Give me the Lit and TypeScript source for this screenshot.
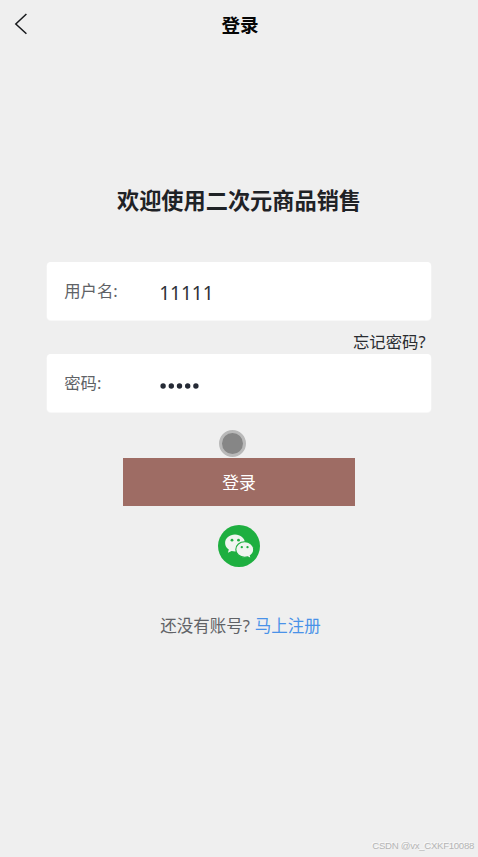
import { LitElement, html, css } from "lit";
import { customElement, property } from "lit/decorators.js";

@customElement("form-field")
class FormField extends LitElement {
  @property() label = "";
  @property() value = "";
  @property({ type: Boolean }) secret = false;

  static styles = css`
    :host {
      display: flex;
      align-items: center;
      height: 58px;
      padding-left: 17.5px;
      background: #fff;
      border-radius: 4px;
      box-sizing: border-box;
      box-shadow: 0 0.5px 0 0.5px #f8f8f8;
    }
    .label { width: 95px; font-size: 16.4px; line-height: 24px; color: #606266; }
    .value {
      font-family: "Noto Sans", sans-serif;
      font-size: 19px;
      line-height: 24px;
      color: #2d3238;
      padding-top: 3px;
    }
    .dots { display: block; width: 41px; height: 8px; margin-top: 5px; fill: #252a35; }
  `;

  render() {
    return html`
      <div class="label">${this.label}</div>
      ${this.secret
        ? html`<svg class="dots" viewBox="0 0 41 8">
            <path
              d="M1.4 4a2.7 2.7 0 1 0 5.4 0a2.7 2.7 0 1 0-5.4 0M9.6 4a2.7 2.7 0 1 0 5.4 0a2.7 2.7 0 1 0-5.4 0M17.8 4a2.7 2.7 0 1 0 5.4 0a2.7 2.7 0 1 0-5.4 0M26 4a2.7 2.7 0 1 0 5.4 0a2.7 2.7 0 1 0-5.4 0M34.2 4a2.7 2.7 0 1 0 5.4 0a2.7 2.7 0 1 0-5.4 0"
            />
          </svg>`
        : html`<div class="value">${this.value}</div>`}
    `;
  }
}

@customElement("app-root")
class AppRoot extends LitElement {
  static styles = css`
    :host {
      display: flex;
      flex-direction: column;
      position: relative;
      height: 857px;
      overflow: hidden;
      background: #efefef;
      font-family: "Noto Sans", "Noto Sans CJK SC", sans-serif;
      color: #222;
    }
    .bar {
      display: grid;
      grid-template-columns: 60px 1fr 60px;
      align-items: center;
      height: 50px;
    }
    .back { display: block; width: 14px; height: 22px; margin: -3px 0 0 14px; }
    .title { text-align: center; font-size: 18.6px; line-height: 26px; font-weight: 700; color: #050505; margin-left: 2px; }
    .welcome {
      margin: 134px 0 0;
      text-align: center;
      font-size: 22.2px;
      line-height: 34px;
      font-weight: 700;
      color: #1f2226;
    }
    .form { display: flex; flex-direction: column; margin: 44.3px 47.4px 0 46.7px; }
    .forgot { height: 34px; line-height: 44px; font-size: 16.4px; text-align: right; padding-right: 5px; box-sizing: border-box; color: #292c30; }
    .login {
      align-self: center;
      width: 232px;
      height: 48px;
      margin-top: 45.7px;
      background: #9e6c64;
      color: #fff;
      font-family: inherit;
      font-size: 16.8px;
      border: 0;
      border-radius: 0;
      padding: 0;
    }
    .wechat { align-self: center; width: 42px; height: 42px; margin-top: 19px; }
    .register { display: flex; justify-content: center; gap: 5px; margin: 47px 0 0 3px; font-size: 16.5px; line-height: 24px; color: #606266; }
    .link { color: #4a92e8; }
    .pointer {
      position: absolute;
      left: 219px;
      top: 430px;
      width: 27px;
      height: 27px;
      box-sizing: border-box;
      border: 3px solid #b9b9b9;
      border-radius: 50%;
      background: #868686;
    }
    .mark {
      position: absolute;
      right: 4px;
      bottom: 5px;
      font: 9.6px/12px "Liberation Sans", sans-serif;
      letter-spacing: -0.28px;
      color: #b5b5b5;
      text-shadow: -1px -1px 0 #fafafa;
    }
  `;

  render() {
    return html`
      <header class="bar">
        <svg class="back" viewBox="0 0 14 22" fill="none" stroke="#17191c" stroke-width="1.5">
          <path d="M12.4 1 1.8 11 12.4 20.8" />
        </svg>
        <div class="title">登录</div>
      </header>
      <h1 class="welcome">欢迎使用二次元商品销售</h1>
      <div class="form">
        <form-field label="用户名:" value="11111"></form-field>
        <div class="forgot">忘记密码?</div>
        <form-field label="密码:" value="11111" secret></form-field>
      </div>
      <button class="login">登录</button>
      <svg class="wechat" viewBox="0 0 42 42">
        <circle cx="21" cy="21" r="21" fill="#1eaf40" />
        <path fill="#f0f5f0" d="M17 9.6C11.5 9.6 7.1 13.3 7.1 18c0 2.7 1.4 4.9 3.7 6.5L9.9 27.8l3.7-1.9c1.1.3 2.2.5 3.4.5 5.5 0 9.9-3.7 9.9-8.4S22.5 9.6 17 9.6Z" />
        <path fill="#f0f5f0" stroke="#1eaf40" stroke-width="1.1" d="M26.7 16.8c-5 0-8.9 3.4-8.9 7.7s3.9 7.8 8.9 7.8c1 0 2.1-.2 3-.4l3.5 1.9-.9-3.2c2.1-1.4 3.4-3.6 3.4-6.1 0-4.3-3.9-7.7-9-7.7Z" />
        <g fill="#1eaf40">
          <circle cx="14" cy="15.2" r="1.4" />
          <circle cx="20.5" cy="15.2" r="1.4" />
          <circle cx="23.8" cy="22.2" r="1.15" />
          <circle cx="29.5" cy="22.2" r="1.15" />
        </g>
      </svg>
      <div class="register"><span>还没有账号?</span><span class="link">马上注册</span></div>
      <div class="pointer"></div>
      <div class="mark">CSDN @vx_CXKF10088</div>
    `;
  }
}
